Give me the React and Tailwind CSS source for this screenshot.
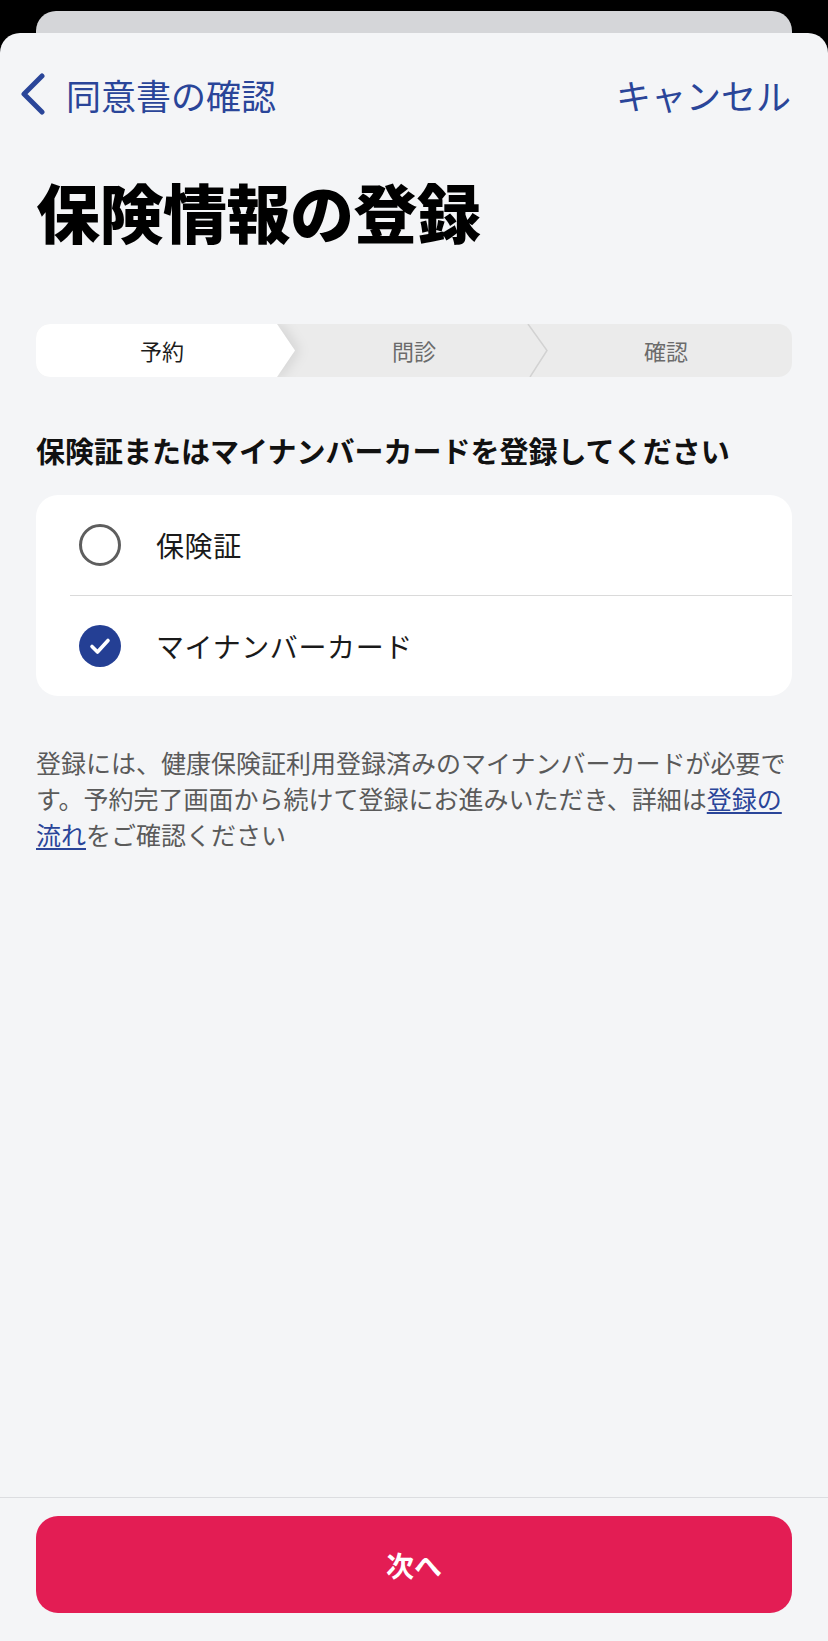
import { useState } from 'react';

const FONT = { fontFamily: '"Noto Sans CJK JP", "Noto Sans", sans-serif' };

const steps = ['予約', '問診', '確認'];

function Stepper() {
  return (
    <div className="relative flex h-[53px] rounded-[14px] bg-[#ebebeb] overflow-hidden">
      {steps.map((s, i) => (
        <div key={s} className="relative flex-1 flex items-center justify-center">
          {i === 0 && (
            <div className="absolute inset-y-0 left-0 right-[-7px] [filter:drop-shadow(5px_0_6px_rgba(0,0,0,0.09))]">
              <div className="h-full w-full bg-white [clip-path:polygon(0_0,calc(100%-18px)_0,100%_50%,calc(100%-18px)_100%,0_100%)]" />
            </div>
          )}
          {i === 1 && (
            <svg className="absolute top-0 right-[-9px] h-[53px] w-[22px]" viewBox="0 0 22 53" fill="none">
              <polyline points="1,0 20,26.5 3,53" stroke="#d2d2d2" strokeWidth="1.5" />
            </svg>
          )}
          <span className={`relative text-[22px] leading-[26px] -mt-[2px] ${i === 0 ? 'text-[#1c1c1c]' : 'text-[#6b6b6b]'}`}>{s}</span>
        </div>
      ))}
    </div>
  );
}

function Radio({ checked }) {
  if (checked) {
    return (
      <svg width="42" height="42" viewBox="0 0 42 42" className="shrink-0">
        <circle cx="21" cy="21" r="21" fill="#243f94" />
        <polyline points="13,21.5 18.5,27 29,15.5" fill="none" stroke="#fff" strokeWidth="3.6" strokeLinecap="round" strokeLinejoin="round" />
      </svg>
    );
  }
  return <div className="w-[42px] h-[42px] shrink-0 rounded-full border-[3.5px] border-[#5e5e5e]" />;
}

export default function App() {
  const [choice, setChoice] = useState('mynumber');
  const options = [
    { id: 'insurance', label: '保険証' },
    { id: 'mynumber', label: 'マイナンバーカード' },
  ];

  return (
    <div className="w-[828px] h-[1641px] bg-black flex flex-col overflow-hidden" style={FONT}>
      <div className="h-[22px] mt-[11px] mx-[36px] rounded-t-[20px] bg-[#d5d6d9] shrink-0" />
      <div className="flex-1 flex flex-col bg-[#f4f5f7] rounded-t-[20px]">
        <div className="h-[44px] mt-[39px] flex items-center justify-between pl-[20px] pr-[37px]">
          <div className="flex items-center gap-[20px]">
            <svg width="26" height="42" viewBox="0 0 26 42" fill="none">
              <polyline points="22,3 4,21 22,39" stroke="#2a4599" strokeWidth="5" strokeLinecap="round" strokeLinejoin="round" />
            </svg>
            <span className="text-[35px] leading-none text-[#2a4599]">同意書の確認</span>
          </div>
          <span className="text-[35px] leading-none text-[#2a4599]">キャンセル</span>
        </div>

        <div className="px-[36px]">
          <h1 className="mt-[56px] text-[64px] leading-[76px] font-black text-black tracking-[-0.5px]">保険情報の登録</h1>

          <div className="mt-[76px]">
            <Stepper />
          </div>

          <h2 className="mt-[51px] text-[29px] leading-[44px] font-bold text-[#111]">保険証またはマイナンバーカードを登録してください</h2>

          <div className="mt-[23px] bg-white rounded-[22px] overflow-hidden">
            {options.map((o, i) => (
              <div key={o.id}>
                {i > 0 && <div className="ml-[34px] h-px bg-[#dadada]" />}
                <button
                  type="button"
                  onClick={() => setChoice(o.id)}
                  className="w-full h-[100px] flex items-center gap-[35px] pl-[43px] text-left"
                >
                  <Radio checked={choice === o.id} />
                  <span className="text-[28px] leading-none text-[#1a1a1a] tracking-[0.6px]">{o.label}</span>
                </button>
              </div>
            ))}
          </div>

          <p className="mt-[48px] text-[25px] leading-[36px] text-[#5a5a5a]">
            登録には、健康保険証利用登録済みのマイナンバーカードが必要です。予約完了画面から続けて登録にお進みいただき、詳細は
            <a href="#" className="text-[#2a4599] underline underline-offset-[3px]">登録の</a>
            <a href="#" className="text-[#2a4599] underline underline-offset-[3px]">流れ</a>
            をご確認ください
          </p>
        </div>

        <div className="flex-1" />

        <div className="border-t border-[#dcdde0] pt-[18px] pb-[28px] px-[36px]">
          <button type="button" className="w-full h-[97px] rounded-[22px] bg-[#e31d54] text-white text-[28px] font-bold">
            次へ
          </button>
        </div>
      </div>
    </div>
  );
}
